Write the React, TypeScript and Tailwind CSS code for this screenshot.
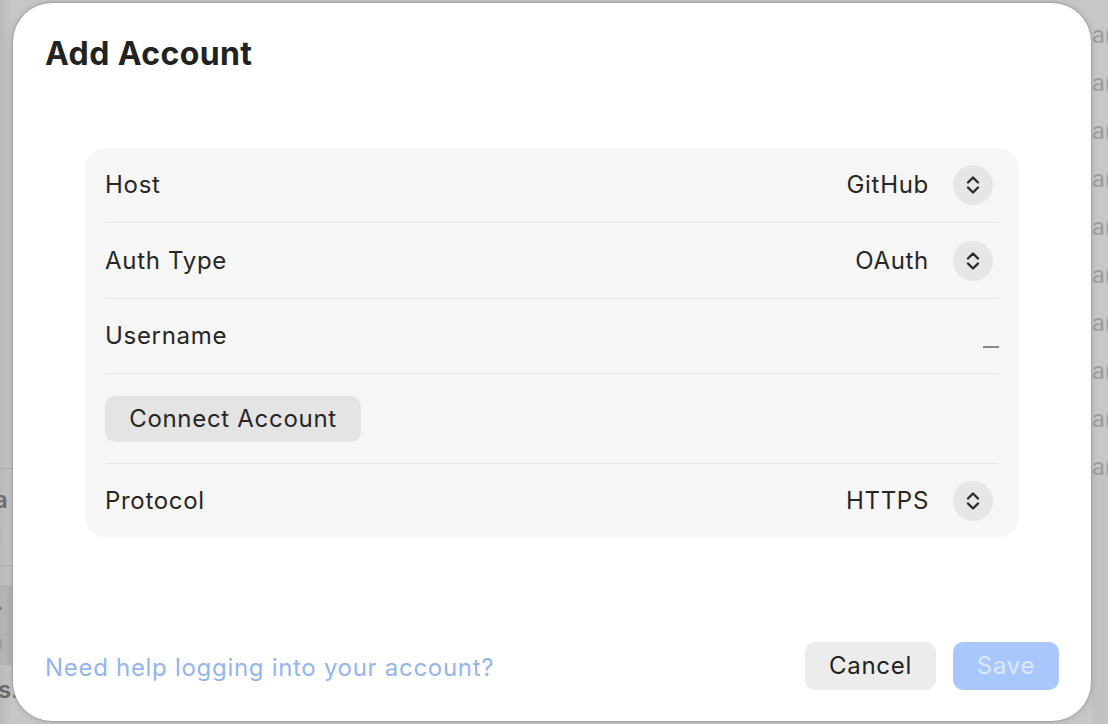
import React from "react";

const font = { fontFamily: "Inter, 'Noto Sans', sans-serif" };

function Stepper() {
  return (
    <div className="ml-[24px] mr-[6px] flex h-[40px] w-[40px] items-center justify-center rounded-full bg-[#e6e6e6]">
      <svg width="16" height="22" viewBox="0 0 16 22" fill="none">
        <path d="M3 8.5 L8 3.5 L13 8.5" stroke="#2b2b2b" strokeWidth="2.4" strokeLinecap="round" strokeLinejoin="round" />
        <path d="M3 13.5 L8 18.5 L13 13.5" stroke="#2b2b2b" strokeWidth="2.4" strokeLinecap="round" strokeLinejoin="round" />
      </svg>
    </div>
  );
}

function Sep() {
  return <div className="mx-[20px] h-px bg-[#e6e6e6]" />;
}

function PickerRow({ label, value, h }: { label: string; value: string; h: string }) {
  return (
    <div className={`flex items-center px-[20px] ${h}`}>
      <span className="flex-1 text-[24px] tracking-[0.7px] text-[#262626]">{label}</span>
      <span className="text-[24px] tracking-[0.7px] text-[#262626]">{value}</span>
      <Stepper />
    </div>
  );
}

export default function App() {
  const arRows = [35, 83, 131, 179, 227, 275, 323, 371, 419, 467];
  return (
    <div className="relative h-[724px] w-[1108px] overflow-hidden bg-[#c7c7c7] pl-[12px] pt-[2px]" style={font}>
      {/* background window fragments */}
      <div className="absolute left-0 top-0 h-full w-[14px] bg-gradient-to-r from-[#b9b9b9] to-[#c9c9c9]" />
      <div className="absolute left-0 top-[468px] h-px w-[14px] bg-[#b0b0b0]" />
      <div className="absolute left-0 top-[565px] h-px w-[14px] bg-[#b0b0b0]" />
      <div className="absolute left-0 top-[585px] h-[80px] w-[14px] bg-[#b3b3b3]" />
      <span className="absolute left-[-6px] top-[486px] text-[24px] font-semibold leading-[28px] text-[#6e6e6e]">a</span>
      <span className="absolute left-[-6px] top-[520px] text-[22px] leading-[26px] text-[#9a9a9a]">t</span>
      <span className="absolute left-[-8px] top-[598px] text-[24px] font-semibold leading-[28px] text-[#666]">r</span>
      <span className="absolute left-[-10px] top-[628px] text-[22px] leading-[26px] text-[#999]">n</span>
      <span className="absolute left-[-2px] top-[676px] text-[24px] font-semibold leading-[28px] text-[#6a6a6a]">s.</span>
      <div className="absolute right-0 top-[470px] h-[254px] w-[16px] bg-[#c2c2c2]" />
      {arRows.map((y) => (
        <span
          key={y}
          className="absolute left-[1092px] text-[23px] leading-[28px] text-[#9c9c9c]"
          style={{ top: y - 14 }}
        >
          ar
        </span>
      ))}

      {/* dialog */}
      <div className="relative flex h-[720px] w-[1080px] flex-col rounded-[40px] border border-[#a3a3a3] bg-white px-[32px] pb-[31px] pt-[31px] shadow-[0_0_6px_rgba(0,0,0,0.15)]">
        <h1 className="text-[32px] font-bold leading-[40px] tracking-[0.4px] text-[#222]">Add Account</h1>

        <div className="mx-[40px] mt-[74px] rounded-[22px] bg-[#f6f6f6]">
          <PickerRow label="Host" value="GitHub" h="h-[74px]" />
          <Sep />
          <PickerRow label="Auth Type" value="OAuth" h="h-[75px]" />
          <Sep />
          <div className="flex h-[74px] items-center px-[20px]">
            <span className="flex-1 text-[24px] tracking-[0.7px] text-[#262626]">Username</span>
            <div className="mt-[22px] h-[2px] w-[16px] bg-[#8a8a8a]" />
          </div>
          <Sep />
          <div className="flex h-[89px] items-center px-[20px]">
            <button className="flex h-[46px] w-[256px] items-center justify-center rounded-[10px] bg-[#e4e4e4] text-[24px] tracking-[0.7px] text-[#262626]">
              Connect Account
            </button>
          </div>
          <Sep />
          <PickerRow label="Protocol" value="HTTPS" h="h-[74px]" />
        </div>

        <div className="flex-1" />

        <div className="flex items-center">
          <span className="mt-[3px] flex-1 text-[24px] tracking-[0.7px] text-[#92b5ee]">Need help logging into your account?</span>
          <button className="flex h-[48px] w-[131px] items-center justify-center rounded-[10px] bg-[#ececec] text-[24px] tracking-[0.7px] text-[#222]">
            Cancel
          </button>
          <button className="ml-[17px] flex h-[48px] w-[106px] items-center justify-center rounded-[10px] bg-[#a9c7fa] text-[24px] tracking-[0.7px] text-[#dce8fd]">
            Save
          </button>
        </div>
      </div>
    </div>
  );
}
